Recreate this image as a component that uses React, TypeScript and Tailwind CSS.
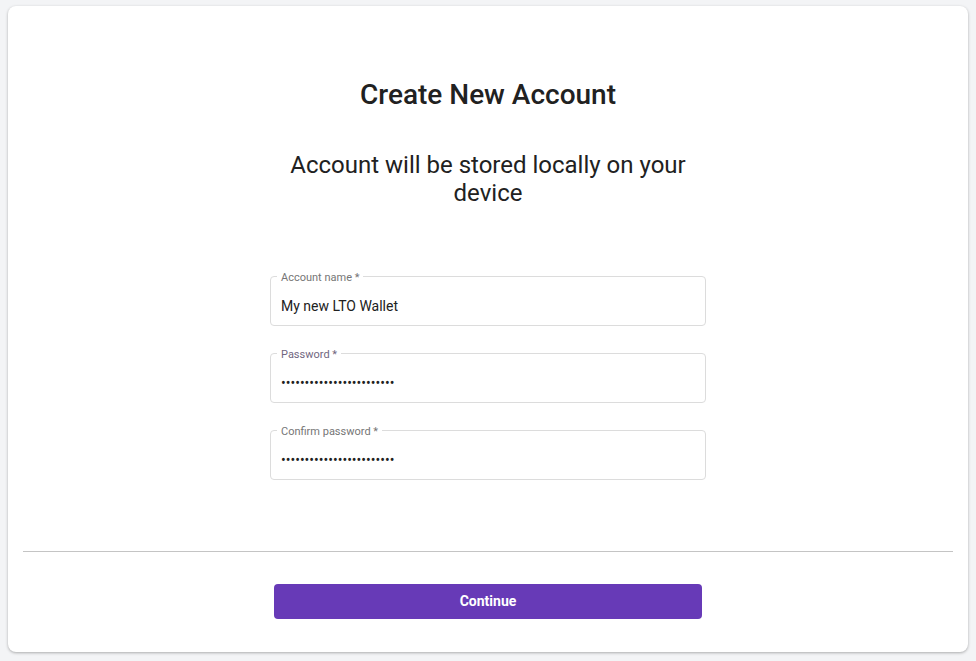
import { useState } from 'react';

type FieldProps = {
  label: string;
  value: string;
  type?: string;
  labelClass?: string;
  onChange: (v: string) => void;
};

const OutlinedField = ({ label, value, type = 'text', labelClass = 'text-[#767676]', onChange }: FieldProps) => {
  return (
    <div className="relative w-[436px] h-[50px] rounded-[4px] border border-[#dcdcdc]">
      {/* label sits on the border line */}
      <span className={`absolute -top-[6px] left-[6px] bg-white px-[4px] text-[11px] leading-[13px] ${labelClass}`}>
        {label} *
      </span>
      <input
        type={type}
        value={value}
        onChange={(e) => onChange(e.target.value)}
        className="w-full h-full bg-transparent px-[10px] pt-[10px] text-[14px] text-[#212121] outline-none"
      />
    </div>
  );
};

const App = () => {
  const [name, setName] = useState('My new LTO Wallet');
  const [password, setPassword] = useState('passwordpassword12345678');
  const [confirm, setConfirm] = useState('passwordpassword12345678');

  return (
    <div className="min-h-screen bg-[#f3f4f6] pt-[6px] px-[8px]" style={{ fontFamily: 'Roboto, "Liberation Sans", sans-serif' }}>
      <div className="h-[646px] bg-white rounded-[8px] shadow-[0_1px_3px_rgba(0,0,0,0.3)] px-[15px] flex flex-col items-center">
        <h2 className="mt-[72px] text-[28px] leading-[34px] font-medium text-[#212121]">Create New Account</h2>
        <p className="mt-[39px] w-[420px] text-center text-[24px] leading-[28px] text-[#212121]">
          Account will be stored locally on your device
        </p>

        <div className="mt-[69px] flex flex-col gap-[27px]">
          <OutlinedField label="Account name" value={name} onChange={setName} />
          <OutlinedField label="Password" type="password" value={password} onChange={setPassword} labelClass="text-[#716680]" />
          <OutlinedField label="Confirm password" type="password" value={confirm} onChange={setConfirm} />
        </div>

        <div className="mt-[71px] w-full h-px bg-[#c4c4c4]" />

        <button className="mt-[32px] w-[428px] h-[35px] rounded-[4px] bg-[#673ab7] text-white text-[14px] font-bold">
          Continue
        </button>
      </div>
    </div>
  );
};

export default App;
